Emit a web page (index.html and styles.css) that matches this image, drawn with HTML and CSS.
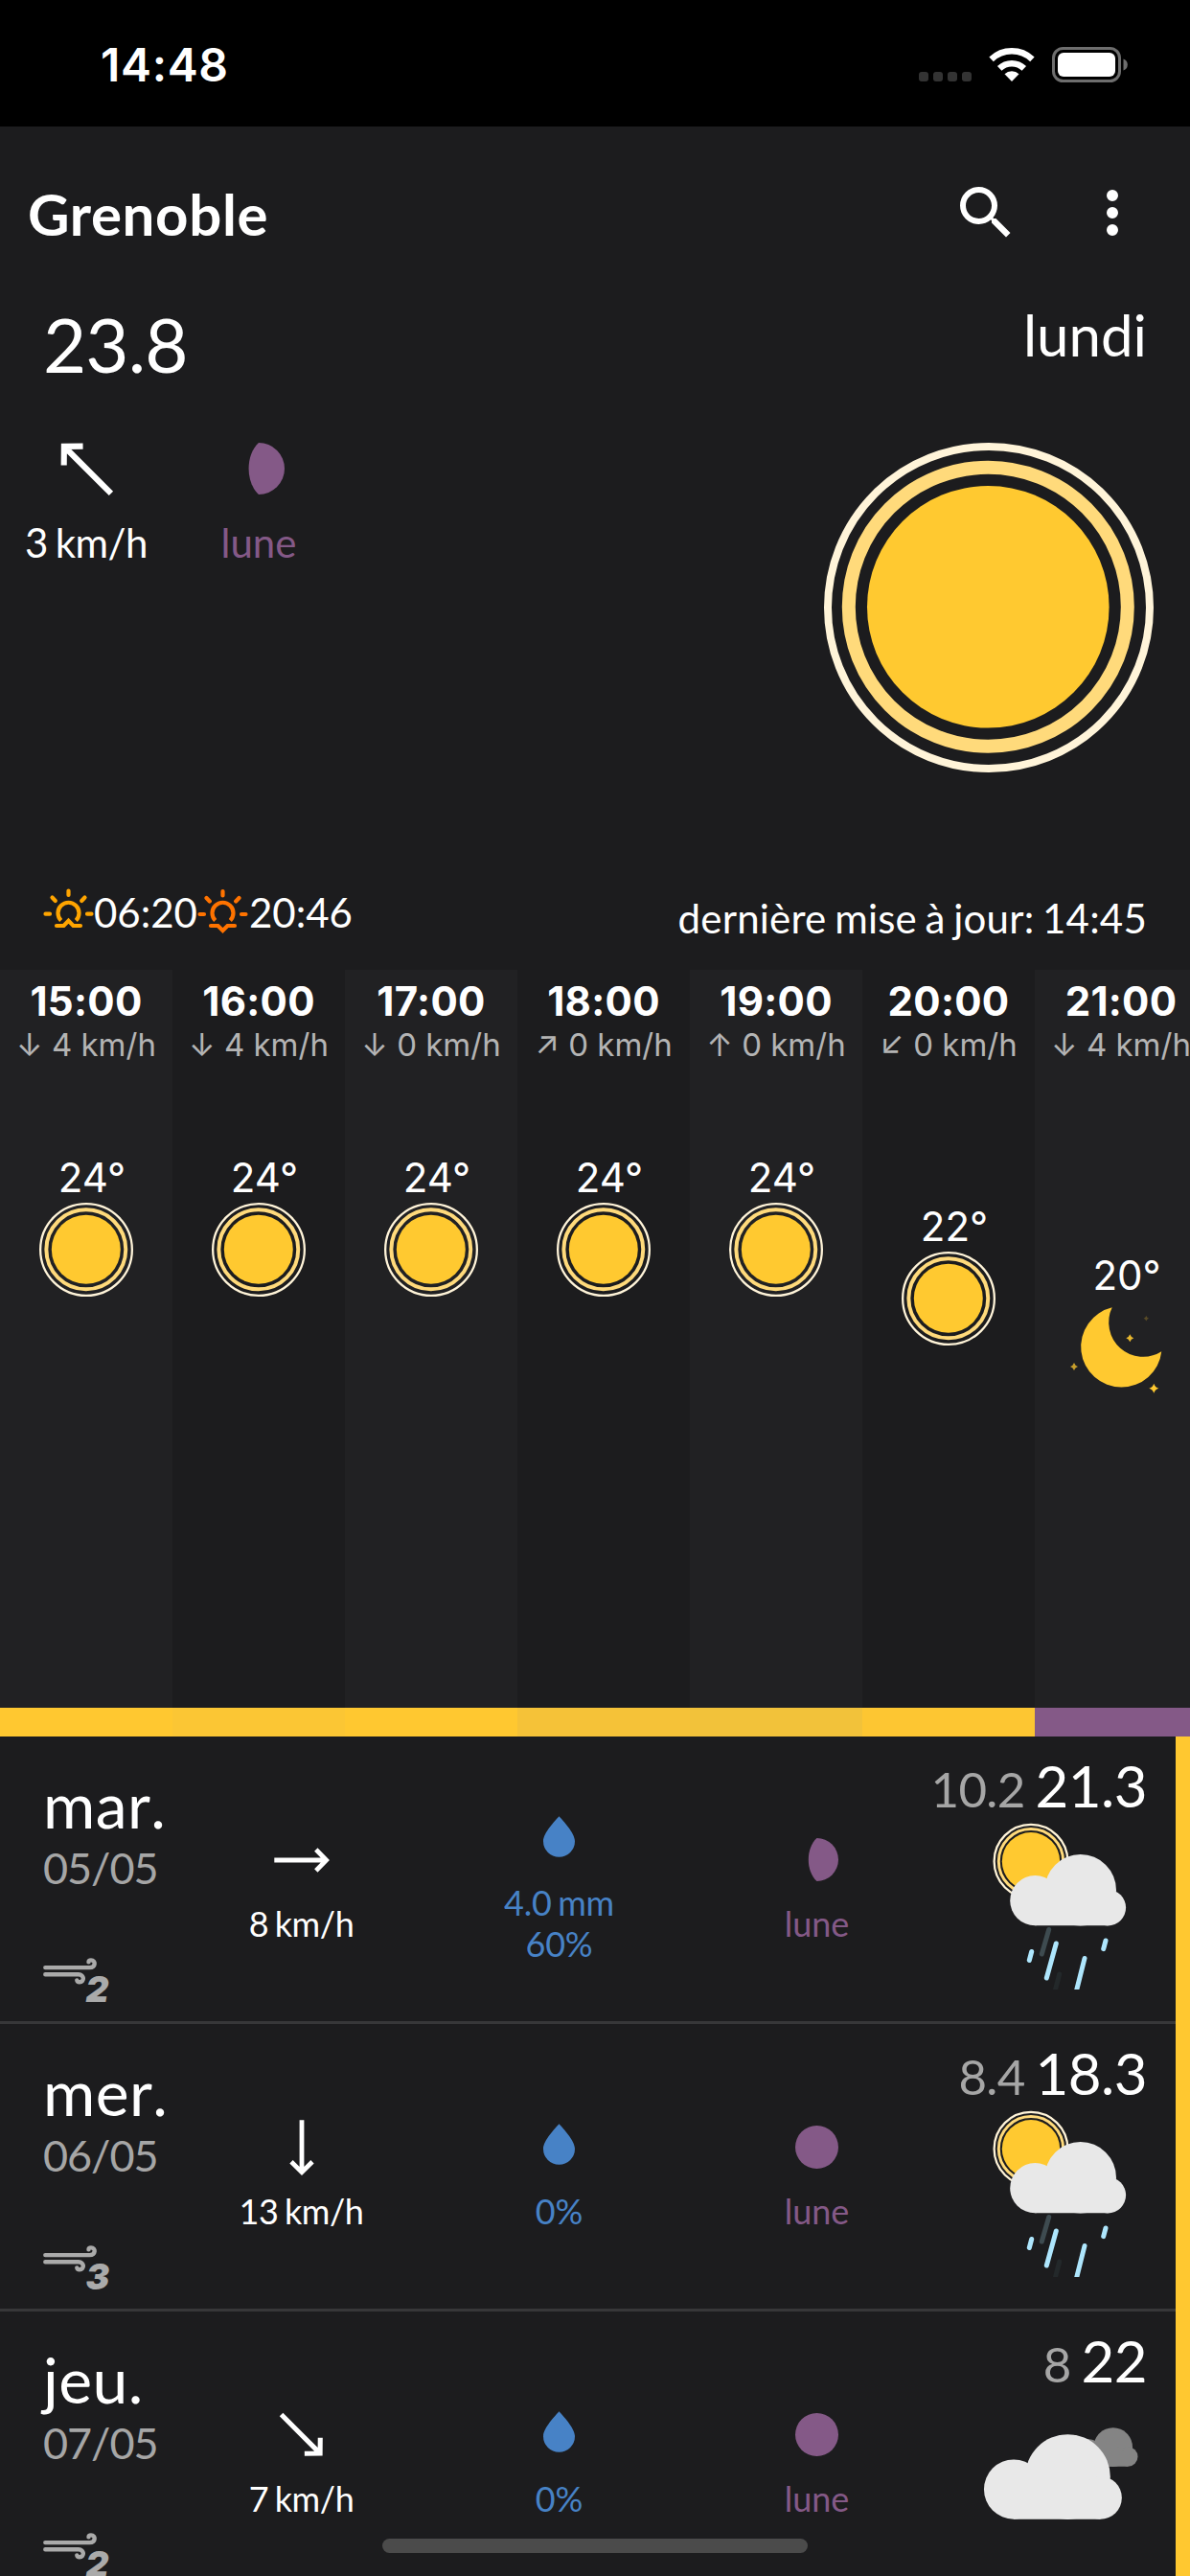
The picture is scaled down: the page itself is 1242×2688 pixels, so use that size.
FILE: index.html
```html
<!DOCTYPE html>
<html lang="fr">
<head>
<meta charset="utf-8">
<title>Grenoble</title>
<link rel="stylesheet" href="styles.css">
</head>
<body>
<svg class="defs" aria-hidden="true">
  <symbol id="sun" viewBox="0 0 344 344">
    <circle cx="172" cy="172" r="168" fill="none" stroke="#fff4d9" stroke-width="8"/>
    <circle cx="171.3" cy="171.3" r="145.5" fill="none" stroke="#ffda7b" stroke-width="14"/>
    <circle cx="171.3" cy="171.3" r="126.3" fill="#ffc930"/>
  </symbol>
  <symbol id="arrow" viewBox="-36 -36 72 72">
    <path d="M-28.7 0H26M14.8 -11L25.6 0L14.8 11" fill="none" stroke="#fff" stroke-width="4.8"/>
  </symbol>
  <symbol id="gibbous" viewBox="-22.5 -22.5 45 45">
    <path d="M0 -22.5A22.5 22.5 0 0 1 0 22.5C-11.6 12 -11.6 -12 0 -22.5Z" fill="#845987"/>
  </symbol>
  <symbol id="full" viewBox="-22.5 -22.5 45 45"><circle r="22.5" fill="#845987"/></symbol>
  <symbol id="drop" viewBox="0 0 33 42.4">
    <path d="M16.5 0C20.5 4.5 33 17.5 33 26A16.5 16.4 0 0 1 0 26C0 17.5 12.5 4.5 16.5 0Z" fill="#4782c6"/>
  </symbol>
  <symbol id="gust" viewBox="0 0 60 30">
    <g fill="none" stroke="#aaa" stroke-width="4.4" stroke-linecap="round">
      <path d="M2.3 10.1H48.5C55 10.1 55.3 2.4 50 2.4Q47.6 2.4 47.5 4.4"/>
      <path d="M2.3 17.3H37C43.2 17.3 43.4 25.2 38 25.2Q35.6 25.2 35.3 23.4"/>
    </g>
  </symbol>
  <g id="cloud">
    <circle cx="63.3" cy="87.2" r="26.1"/>
    <circle cx="110.7" cy="76.3" r="37.3"/>
    <circle cx="139.3" cy="94.6" r="18.8"/>
    <path d="M63.3 76H120L139.3 90V113.3H63.3Z"/>
  </g>
  <symbol id="sunrain" viewBox="0 0 180 180">
    <circle cx="59" cy="46.3" r="38.4" fill="none" stroke="#fff4d9" stroke-width="2.3"/>
    <circle cx="59" cy="46.3" r="33.7" fill="none" stroke="#ffda7b" stroke-width="3"/>
    <circle cx="59" cy="46.3" r="30.2" fill="#ffc930"/>
    <use href="#cloud" fill="#e8e8e8"/>
    <g fill="none" stroke-width="5" stroke-linecap="round">
      <path d="M77.7 117.5L70.3 143" stroke="#3e4b50"/>
      <path d="M88.7 164L84 182" stroke="#23282a"/>
      <path d="M59.7 140.5L57.3 149.5M85.3 132L75.3 168M137 129L134.7 137.7M115 147.5L106.3 182" stroke="#aee6fd"/>
    </g>
  </symbol>
  <symbol id="cloudy" viewBox="0 0 180 180">
    <use href="#cloud" fill="#848484" transform="translate(84.5 16.1) scale(.544)"/>
    <use href="#cloud" fill="#e8e8e8" transform="translate(-34.3 -2.2) scale(1.19)"/>
  </symbol>
</svg>

<div class="app">
  <div class="status">
    <span class="clock">14:48</span>
    <div class="status-icons">
      <div class="cell-dots"><i></i><i></i><i></i><i></i></div>
      <svg class="wifi" width="48" height="36" viewBox="0 0 48 36">
        <path d="M24 36L16.5 28.2A11 11 0 0 1 31.5 28.2Z" fill="#fff"/>
        <path d="M11.2 22.4A18.5 18.5 0 0 1 36.8 22.4" fill="none" stroke="#fff" stroke-width="6.5"/>
        <path d="M2.6 12.8A31 31 0 0 1 45.4 12.8" fill="none" stroke="#fff" stroke-width="6.5"/>
      </svg>
      <svg class="battery" width="80" height="37" viewBox="0 0 80 37">
        <rect x="1.5" y="1.5" width="69" height="34" rx="10" fill="none" stroke="#6e6e6e" stroke-width="3"/>
        <rect x="6" y="6" width="60" height="25" rx="6" fill="#fff"/>
        <path d="M74.5 12.5Q78.8 14 78.8 18.5T74.5 24.5Z" fill="#6e6e6e"/>
      </svg>
    </div>
  </div>

  <header class="bar">
    <h1>Grenoble</h1>
    <svg class="action" viewBox="0 0 24 24"><path fill="#fff" d="M9.5 3A6.5 6.5 0 0 1 16 9.5C16 11.11 15.41 12.59 14.44 13.73L14.71 14H15.5L20.5 19L19 20.5L14 15.5V14.71L13.73 14.44C12.59 15.41 11.11 16 9.5 16A6.5 6.5 0 0 1 9.5 3M9.5 5C7 5 5 7 5 9.5S7 14 9.5 14 14 12 14 9.5 12 5 9.5 5Z"/></svg>
    <svg class="action" viewBox="0 0 24 24"><path fill="#fff" d="M12 16A2 2 0 0 1 14 18A2 2 0 0 1 10 18A2 2 0 0 1 12 16M12 10A2 2 0 0 1 14 12A2 2 0 0 1 10 12A2 2 0 0 1 12 10M12 4A2 2 0 0 1 14 6A2 2 0 0 1 10 6A2 2 0 0 1 12 4Z"/></svg>
  </header>

  <section class="current">
    <div class="current-top">
      <div class="now">
        <div class="now-temp">23.8</div>
        <div class="now-stats">
          <div class="stat speed"><div class="stat-icon"><svg class="arrow-lg nw"><use href="#arrow"/></svg></div>3 km/h</div>
          <div class="stat moon"><div class="stat-icon"><svg class="moon-lg"><use href="#gibbous"/></svg></div>lune</div>
        </div>
      </div>
      <div class="today">
        <div class="today-name">lundi</div>
        <svg class="today-sun"><use href="#sun"/></svg>
      </div>
    </div>
    <div class="current-foot">
      <div class="sun-times">
        <svg width="53" height="50" viewBox="0 0 53 50" fill="none" stroke="#ffa500" stroke-width="4.2" stroke-linecap="round">
          <path d="M18.7 33.5A11 11 0 1 1 34.3 33.5" stroke-linecap="butt"/>
          <path d="M26.5 2.5V7M9.5 9.5L12.8 13M43.5 9.5L40.2 13M2.5 26.7H7M46 26.7H50.5"/>
          <path d="M14 39H21.5L26.5 33.8L31.5 39H39"/>
        </svg><span>06:20</span><svg width="54" height="50" viewBox="0 0 54 50" fill="none" stroke="#ff7300" stroke-width="4.2" stroke-linecap="round">
          <path d="M18.7 33.5A11 11 0 1 1 34.3 33.5" stroke-linecap="butt"/>
          <path d="M26.5 3V7.5M9.5 10L12.8 13.5M43.5 10L40.2 13.5M2.5 27H7M46 27H50.5"/>
          <path d="M14 39H21.5L26.5 44L31.5 39H39"/>
        </svg><span>20:46</span>
      </div>
      <div class="updated">dernière mise à jour: 14:45</div>
    </div>
  </section>

  <section class="hours">
    <div class="hour"><b>15:00</b><span class="hw">↓ 4 km/h</span><span class="ht">24°</span><svg class="hi"><use href="#sun"/></svg><i class="tone a"></i></div>
    <div class="hour"><b>16:00</b><span class="hw">↓ 4 km/h</span><span class="ht">24°</span><svg class="hi"><use href="#sun"/></svg><i class="tone b"></i></div>
    <div class="hour"><b>17:00</b><span class="hw">↓ 0 km/h</span><span class="ht">24°</span><svg class="hi"><use href="#sun"/></svg><i class="tone a"></i></div>
    <div class="hour"><b>18:00</b><span class="hw">↗ 0 km/h</span><span class="ht">24°</span><svg class="hi"><use href="#sun"/></svg><i class="tone c"></i></div>
    <div class="hour"><b>19:00</b><span class="hw">↑ 0 km/h</span><span class="ht">24°</span><svg class="hi"><use href="#sun"/></svg><i class="tone d"></i></div>
    <div class="hour" style="--drop:51px"><b>20:00</b><span class="hw">↙ 0 km/h</span><span class="ht">22°</span><svg class="hi"><use href="#sun"/></svg><i class="tone e"></i></div>
    <div class="hour" style="--drop:102px"><b>21:00</b><span class="hw">↓ 4 km/h</span><span class="ht">20°</span>
      <svg class="hi" viewBox="0 0 98 98" fill="#ffc930">
        <path d="M39.7 7.3A42.2 42.2 0 1 0 91.3 53.3A36 36 0 0 1 39.7 7.3Z"/>
        <path opacity=".25" d="M75.3 16q.7 2 2.7 2.7q-2 .7-2.7 2.7q-.7-2-2.7-2.7q2-.7 2.7-2.7z"/>
        <path opacity=".9" d="M58.3 35.3q1 3 4 4q-3 1-4 4q-1-3-4-4q3-1 4-4z"/>
        <path opacity=".75" d="M0 65q1 3 4 4q-3 1-4 4q-1-3-4-4q3-1 4-4z"/>
        <path d="M83.3 86.7q1.2 3.8 5 5q-3.8 1.2-5 5q-1.2-3.8-5-5q3.8-1.2 5-5z"/>
      </svg><i class="tone night"></i></div>
  </section>

  <section class="days">
    <div class="list">
      <article class="day">
        <div class="date"><strong>mar.</strong><span>05/05</span>
          <svg class="wind" viewBox="0 0 75 50"><use href="#gust" width="60" height="30"/><text x="44.500" y="45.700">2</text></svg></div>
        <div class="metric speed"><div class="mi"><svg class="arrow"><use href="#arrow"/></svg></div>8 km/h</div>
        <div class="metric rain"><div class="mi"><svg class="drop"><use href="#drop"/></svg></div>4.0 mm<br>60%</div>
        <div class="metric moon"><div class="mi"><svg class="moon-sm"><use href="#gibbous"/></svg></div>lune</div>
        <div class="forecast"><div class="temps"><small>10.2</small> 21.3</div><svg class="sky"><use href="#sunrain"/></svg></div>
      </article>
      <article class="day">
        <div class="date"><strong>mer.</strong><span>06/05</span>
          <svg class="wind" viewBox="0 0 75 50"><use href="#gust" width="60" height="30"/><text x="44.500" y="45.700">3</text></svg></div>
        <div class="metric speed"><div class="mi"><svg class="arrow s"><use href="#arrow"/></svg></div>13 km/h</div>
        <div class="metric rain"><div class="mi"><svg class="drop"><use href="#drop"/></svg></div>0%</div>
        <div class="metric moon"><div class="mi"><svg class="moon-sm"><use href="#full"/></svg></div>lune</div>
        <div class="forecast"><div class="temps"><small>8.4</small> 18.3</div><svg class="sky"><use href="#sunrain"/></svg></div>
      </article>
      <article class="day">
        <div class="date"><strong>jeu.</strong><span>07/05</span>
          <svg class="wind" viewBox="0 0 75 50"><use href="#gust" width="60" height="30"/><text x="44.500" y="45.700">2</text></svg></div>
        <div class="metric speed"><div class="mi"><svg class="arrow se"><use href="#arrow"/></svg></div>7 km/h</div>
        <div class="metric rain"><div class="mi"><svg class="drop"><use href="#drop"/></svg></div>0%</div>
        <div class="metric moon"><div class="mi"><svg class="moon-sm"><use href="#full"/></svg></div>lune</div>
        <div class="forecast"><div class="temps"><small>8</small> 22</div><svg class="sky"><use href="#cloudy"/></svg></div>
      </article>
    </div>
    <div class="side"></div>
  </section>
  <div class="home-indicator"></div>
</div>
</body>
</html>
```
FILE: styles.css
```css
* { box-sizing: border-box; }
body { margin: 0; background: #1c1c1e; }
svg { display: block; flex: none; }
.defs { position: absolute; width: 0; height: 0; }

.app {
  position: relative;
  width: 1242px;
  height: 2688px;
  overflow: hidden;
  background: #1c1c1e;
  color: #fff;
  font-family: Lato, "Noto Sans", sans-serif;
  font-size: 42px;
  line-height: 50px;
}

/* status bar */
.status {
  display: flex;
  justify-content: space-between;
  height: 132px;
  padding: 0 64px 0 105px;
  background: #000;
}
.clock {
  padding-top: 38px;
  font: 600 48px/60px Inter, sans-serif;
  letter-spacing: .7px;
}
.status-icons { display: flex; padding-top: 49px; }
.cell-dots { display: flex; gap: 5px; padding: 26px 18px 0 0; }
.cell-dots i { width: 10px; height: 10px; border-radius: 3px; background: #333; }
.wifi { margin-right: 18px; }

/* title bar */
.bar {
  display: flex;
  align-items: center;
  height: 180px;
  padding: 0 45px 0 29px;
}
.bar h1 {
  flex: 1;
  margin: 0;
  padding-top: 2px;
  font-size: 60px;
  line-height: 72px;
  font-weight: 700;
  letter-spacing: .65px;
}
.action { width: 72px; height: 72px; }
.action + .action { margin-left: 60px; }

/* current conditions */
.current { display: flex; flex-direction: column; height: 700px; }
.current-top { display: flex; justify-content: space-between; height: 615px; }
.now-temp { padding-left: 45px; font-size: 78px; line-height: 94px; letter-spacing: -.9px; }
.now-stats { display: flex; margin-top: 30px; }
.stat { width: 180px; text-align: center; }
.stat-icon { display: flex; align-items: center; justify-content: center; height: 105px; }
.arrow-lg { width: 92px; height: 92px; }
.nw { transform: rotate(225deg); }
.moon-lg { width: 54px; height: 54px; }
.moon { color: #845987; }
.speed { letter-spacing: -.012em; word-spacing: -.06em; }
.today { display: flex; flex-direction: column; align-items: flex-end; padding-top: 1px; }
.today-name { padding-right: 45px; font-size: 60px; line-height: 72px; }
.today-sun { width: 344px; height: 344px; margin: 77px 38px 0 0; }
.current-foot { display: flex; justify-content: space-between; padding: 0 45px; }
.sun-times { display: flex; }
.updated { padding-top: 6px; letter-spacing: .2px; word-spacing: -2.3px; }

/* hourly strip */
.hours { display: flex; height: 800px; font-family: Inter, sans-serif; }
.hour {
  display: flex;
  flex: none;
  flex-direction: column;
  align-items: center;
  width: 180px;
  padding-top: 8px;
}
.hour:nth-child(odd) { background: #212123; }
.hour b { font-weight: 700; letter-spacing: .3px; }
.hw { color: #b4b4b4; font-size: 33px; line-height: 40px; white-space: nowrap; }
.ht { margin-top: calc(94px + var(--drop, 0px)); padding-left: 12px; }
.hi { width: 98px; height: 98px; margin-top: 1px; overflow: visible; }
.tone { align-self: stretch; height: 30px; margin-top: auto; }
.a { background: #ffc830; }
.b { background: #fbc634; }
.c { background: #f5c238; }
.d { background: #f2c23a; }
.e { background: #fdc632; }
.night { background: #845987; }

/* daily list */
.days { display: flex; }
.list { width: 1227px; }
.side { width: 15px; background: #ffc830; }
.day {
  display: grid;
  grid-template-columns: 180px 269px 269px 269px 240px;
  height: 300px;
  border-bottom: 3px solid #373739;
}
.date { display: flex; flex-direction: column; padding: 31px 0 0 45px; }
.date strong {
  font-size: 66px;
  line-height: 79px;
  font-weight: 400;
  font-kerning: none;
  letter-spacing: .4px;
}
.date span { color: #a6a6a6; font-size: 45px; line-height: 54px; letter-spacing: -1.05px; }
.wind { width: 75px; height: 50px; margin-top: 67px; overflow: visible; }
.wind text { fill: #aaa; font: italic 900 37px Inter, sans-serif; }
.metric {
  align-self: center;
  padding-top: 3px;
  text-align: center;
  font-size: 36px;
  line-height: 43px;
}
.rain { color: #4782c6; word-spacing: -2.5px; letter-spacing: -.2px; }
.mi { display: flex; align-items: center; justify-content: center; height: 90px; }
.arrow { width: 72px; height: 72px; }
.s { transform: rotate(90deg); }
.se { width: 76px; height: 76px; transform: rotate(45deg); }
.drop { width: 33px; height: 43px; margin-bottom: 6px; }
.moon-sm { width: 45px; height: 45px; }
.forecast {
  display: flex;
  flex-direction: column;
  align-items: flex-end;
  padding: 15px 30px 0 0;
}
.temps {
  height: 72px;
  font-size: 60px;
  line-height: 72px;
  letter-spacing: -.5px;
  word-spacing: -4px;
  white-space: nowrap;
}
.temps small { color: #a6a6a6; font-size: 51px; line-height: 60px; letter-spacing: -.7px; }
.sky { width: 180px; height: 180px; margin-top: -3px; }

.home-indicator {
  position: absolute;
  left: 399px;
  bottom: 24px;
  width: 444px;
  height: 15px;
  border-radius: 8px;
  background: #4b4b4b;
}
```
